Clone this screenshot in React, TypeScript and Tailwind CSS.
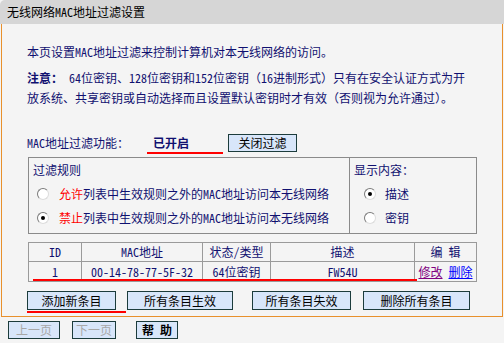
const F = "font-['Noto_Sans_Mono_CJK_SC','Noto_Sans_CJK_SC',sans-serif]";

function Radio({ checked }: { checked?: boolean }) {
  return (
    <span className="w-[12px] h-[12px] rounded-full border border-t-[#7a7a7a] border-l-[#7a7a7a] border-r-[#dcdcdc] border-b-[#dcdcdc] bg-white flex items-center justify-center shrink-0">
      {checked ? <span className="w-[4px] h-[4px] rounded-full bg-black" /> : null}
    </span>
  );
}

function Btn({ label, w, muted, bold }: { label: string; w: string; muted?: boolean; bold?: boolean }) {
  return (
    <div
      className={`${w} h-full bg-[#d8e6fa] border border-[#1c3c3c] flex items-center justify-center text-[12px] leading-none whitespace-pre ${
        muted ? "text-[#a8a8a8]" : "text-black"
      } ${bold ? "font-bold" : ""}`}
    >
      {label}
    </div>
  );
}

export default function App() {
  const navy = "text-[#101070]";
  return (
    <div className={`w-[504px] h-[343px] bg-[#f4f4f4] flex flex-col ${F} text-[12px]`}>
      <div className="h-[24px] bg-[#d6d6d6] rounded-tl-[5px] pl-[7px] leading-[24px] text-black text-[12px] shrink-0">
        无线网络MAC地址过滤设置
      </div>
      <div className="ml-[1px] w-[502px] h-[293px] border-l border-r border-b border-[#e8902c] pl-[25px] pt-[18px] flex flex-col shrink-0">
        <p className={`leading-[20px] ${navy} whitespace-nowrap`}>本页设置MAC地址过滤来控制计算机对本无线网络的访问。</p>
        <p className={`mt-[6px] leading-[20px] ${navy} whitespace-nowrap`}>
          <b>注意：</b> 64位密钥、128位密钥和152位密钥（16进制形式）只有在安全认证方式为开
          <br />
          放系统、共享密钥或自动选择而且设置默认密钥时才有效（否则视为允许通过）。
        </p>
        <div className="mt-[26px] h-[18px] flex items-start">
          <div className={`w-[120px] leading-[18px] ${navy}`}>MAC地址过滤功能：</div>
          <div className={`w-[76px] h-[20px] pl-[6px] leading-[18px] font-bold ${navy} border-b-2 border-[#ff0000]`}>已开启</div>
          <div className="ml-[5px] h-[18px] flex">
            <Btn label="关闭过滤" w="w-[69px]" />
          </div>
        </div>
        <div className="mt-[5px] ml-[1px] h-[77px] flex">
          <div className="w-[322px] h-full border border-[#8a8a8a] pl-[4px] pt-[4px] flex flex-col">
            <div className={`leading-[16px] ${navy}`}>过滤规则</div>
            <div className="mt-[8px] h-[16px] flex items-center pl-[4px]">
              <Radio />
              <span className={`ml-[10px] ${navy}`}>
                <span className="text-[#ff0000]">允许</span>列表中生效规则之外的MAC地址访问本无线网络
              </span>
            </div>
            <div className="mt-[8px] h-[16px] flex items-center pl-[4px]">
              <Radio checked />
              <span className={`ml-[10px] ${navy}`}>
                <span className="text-[#ff0000]">禁止</span>列表中生效规则之外的MAC地址访问本无线网络
              </span>
            </div>
          </div>
          <div className="w-[127px] h-full border-t border-r border-b border-[#8a8a8a] pl-[4px] pt-[4px] flex flex-col">
            <div className={`leading-[16px] ${navy}`}>显示内容：</div>
            <div className="mt-[8px] h-[16px] flex items-center pl-[10px]">
              <Radio checked />
              <span className={`ml-[9px] ${navy}`}>描述</span>
            </div>
            <div className="mt-[8px] h-[16px] flex items-center pl-[10px]">
              <Radio />
              <span className={`ml-[9px] ${navy}`}>密钥</span>
            </div>
          </div>
        </div>
        <div className="relative mt-[8px] ml-[1px] w-[449px] border border-[#9a9a9a] flex flex-col">
          <div className={`h-[19px] flex border-b border-[#9a9a9a] ${navy}`}>
            <div className="w-[53px] border-r border-[#9a9a9a] flex items-center justify-center">ID</div>
            <div className="w-[121px] border-r border-[#9a9a9a] flex items-center justify-center">MAC地址</div>
            <div className="w-[68px] border-r border-[#9a9a9a] flex items-center justify-center">状态/类型</div>
            <div className="w-[144px] border-r border-[#9a9a9a] flex items-center justify-center">描述</div>
            <div className="w-[61px] flex items-center justify-center whitespace-pre">编 辑</div>
          </div>
          <div className={`h-[19px] flex ${navy}`}>
            <div className="w-[53px] border-r border-[#9a9a9a] flex items-center justify-center">1</div>
            <div className="w-[121px] border-r border-[#9a9a9a] flex items-center justify-center">00-14-78-77-5F-32</div>
            <div className="w-[68px] border-r border-[#9a9a9a] flex items-center justify-center">64位密钥</div>
            <div className="w-[144px] border-r border-[#9a9a9a] flex items-center justify-center">FW54U</div>
            <div className="w-[61px] flex items-center justify-center gap-[6px]">
              <span className="text-[#800080] underline">修改</span>
              <span className="text-[#0000ff] underline">删除</span>
            </div>
          </div>
          <div className="absolute left-[4px] top-[36px] w-[384px] h-[2px] bg-[#ff0000]" />
        </div>
        <div className="mt-[9px] flex items-start">
          <div className="w-[99px] pb-[1px] border-b-2 border-[#ff0000]">
            <div className="h-[19px] flex">
              <Btn label="添加新条目" w="w-[89px]" />
            </div>
          </div>
          <div className="ml-[1px] h-[19px] flex">
            <Btn label="所有条目生效" w="w-[106px]" />
          </div>
          <div className="ml-[19px] h-[19px] flex">
            <Btn label="所有条目失效" w="w-[99px]" />
          </div>
          <div className="ml-[12px] h-[19px] flex">
            <Btn label="删除所有条目" w="w-[107px]" />
          </div>
        </div>
      </div>
      <div className="mt-[4px] ml-[8px] h-[18px] flex gap-[12px]">
        <Btn label="上一页" w="w-[52px]" muted />
        <Btn label="下一页" w="w-[44px]" muted />
        <div className="ml-[8px] h-full flex">
          <Btn label="帮 助" w="w-[42px]" bold />
        </div>
      </div>
    </div>
  );
}
